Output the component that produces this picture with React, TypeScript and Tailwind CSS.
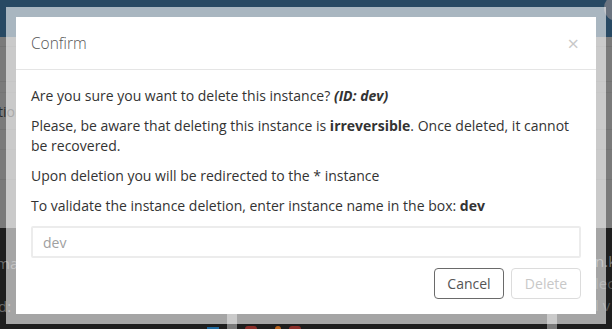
import { useState } from 'react'

const font = { fontFamily: '"Open Sans", "Liberation Sans", sans-serif' }

export default function App() {
  const [name, setName] = useState('')

  return (
    <div className="relative w-[612px] h-[329px] overflow-hidden bg-[#7a7a7a]" style={font}>
      {/* Page behind the dialog (already dimmed) */}
      <div className="h-[37px] bg-[#284963] flex justify-end">
        <div className="w-[26px] h-[26px] -mt-[5px] -mr-[18px] rounded-full bg-[#6b7480]" />
      </div>

      <div className="h-[191px] bg-[#7a7a7a] text-[14px] text-[#2a2a2a]">
        <div className="h-[10px] border-b border-[#727272]" />
        <div className="h-[35px] border-b border-[#727272]" />
        <div className="h-[11px] border-b border-[#747474]" />
        <div className="h-[37px] border-b border-[#727272] flex items-center -ml-[2px]">tion</div>
        <div className="h-[20px] border-b border-[#747474]" />
        <div className="h-[30px] border-b border-[#727272]" />
      </div>

      <div className="flex gap-[10px] h-[101px] bg-[#7a7a7a]">
        <div className="w-[227px] shrink-0 bg-[#1e1e1e] flex flex-col text-[15px] text-[#6a6a6a]">
          <div className="mt-[24px] -ml-[4px]">mar</div>
          <div className="mt-[20px] -ml-[2px]">d:</div>
          <div className="mt-auto flex ml-[207px] h-[2px]">
            <span className="w-[12px] h-[2px] bg-[#1f6aa0]" />
          </div>
        </div>
        <div className="w-[310px] shrink-0 bg-[#1e1e1e] flex flex-col">
          <div className="mt-auto flex items-end ml-[8px] h-[3px]">
            <span className="w-[12px] h-[3px] rounded-t-full bg-[#8c2f2a]" />
            <span className="w-[6px] h-[3px] ml-[18px] rounded-t-full bg-[#c0661e]" />
            <span className="w-[12px] h-[3px] ml-[8px] rounded-t-full bg-[#8c2f2a]" />
          </div>
        </div>
        <div className="w-[310px] shrink-0 bg-[#1e1e1e] flex flex-col text-[15px] text-[#777] pl-[38px] leading-[22px]">
          <div className="mt-[22px]">n.k</div>
          <div className="text-[#555]">lec</div>
          <div className="text-[#555]">l v</div>
        </div>
      </div>

      {/* Dialog */}
      <div className="absolute inset-0 flex justify-center items-start pt-[7px]">
        <div className="w-[600px] p-[10px] bg-white/60">
          <div className="bg-white">
            <div className="flex items-center justify-between px-[15px] pt-[16px] pb-[15px] border-b border-[#e5e5e5]">
              <h4 className="text-[15.5px] leading-[21px] font-light text-[#555]">Confirm</h4>
              <button className="text-[20px] leading-[21px] font-normal text-[#c8c8c8] mr-[2px]">×</button>
            </div>
            <div className="p-[15px] pt-[16px] text-[14px] leading-[20px] text-[#333]">
              <p className="mb-[10px]">
                Are you sure you want to delete this instance? <b><i>(ID: dev)</i></b>
              </p>
              <p className="mb-[10px]">
                Please, be aware that deleting this instance is <b>irreversible</b>. Once deleted, it cannot be recovered.
              </p>
              <p className="mb-[10px]">Upon deletion you will be redirected to the * instance</p>
              <p className="mb-[10px]">
                To validate the instance deletion, enter instance name in the box: <b>dev</b>
              </p>
              <input
                value={name}
                onChange={(e) => setName(e.target.value)}
                placeholder="dev"
                className="block w-full h-[32px] px-[10px] border-2 border-[#ececec] rounded-[2px] text-[14px] text-[#333] placeholder:text-[#a0a0a0] outline-none"
              />
              <div className="flex justify-end gap-[7px] mt-[10px]">
                <button className="w-[70px] h-[31px] border border-[#6a6a6a] rounded-[4px] text-[14px] text-[#555]">
                  Cancel
                </button>
                <button
                  disabled={name !== 'dev'}
                  className="w-[70px] h-[31px] border border-[#dcdcdc] rounded-[4px] text-[14px] text-[#c8c8c8]"
                >
                  Delete
                </button>
              </div>
            </div>
          </div>
        </div>
      </div>
    </div>
  )
}
